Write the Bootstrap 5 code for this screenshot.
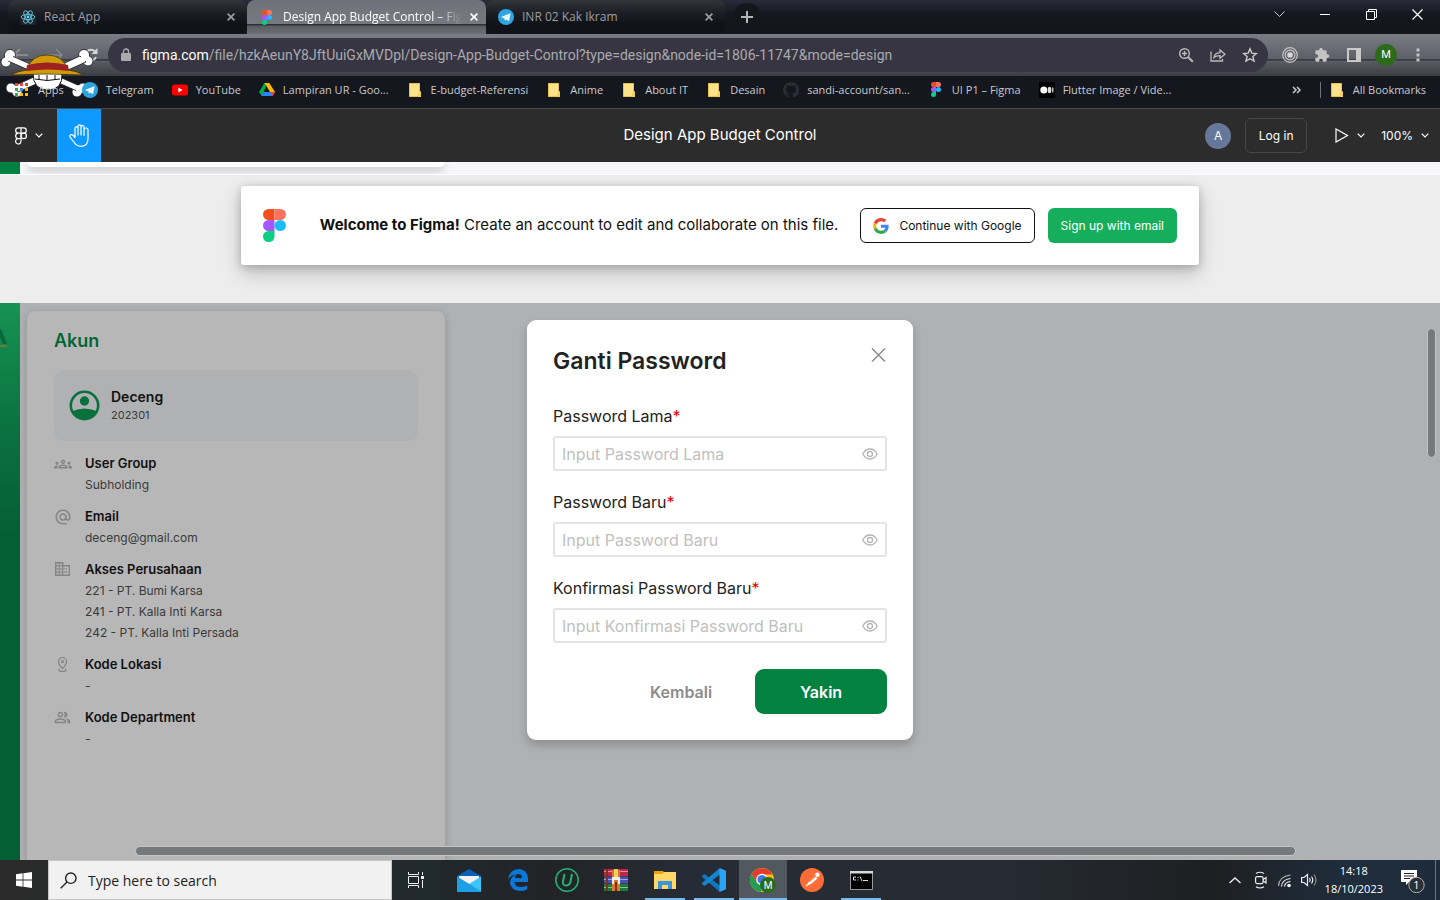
<!DOCTYPE html>
<html lang="en">
<head>
<meta charset="utf-8">
<meta name="viewport" content="width=device-width, initial-scale=1">
<title>Design App Budget Control – Figma</title>
<link href="https://cdn.jsdelivr.net/npm/bootstrap@5.3.0/dist/css/bootstrap.min.css" rel="stylesheet">
<style>
  :root { --ui: "Open Sans", "Noto Sans", sans-serif; --brand: #038141; }
  body { font-family: Inter, "Liberation Sans", sans-serif; color: #111; }
  button, input { font-family: inherit; }
  svg { display: block; flex: none; }
  .plain { background: none; border: 0; padding: 0; color: inherit; }
  .screen { height: 100vh; }

  /* browser chrome */
  .chrome { font-family: var(--ui); font-size: 11px; line-height: 16px; color: #c9cacd; background: #14171e; }
  .tabstrip { height: 34px; padding-left: 8px; background: linear-gradient(#292b3a, #161820 40%, #13151d); }
  .tab-item { flex: 0 1 239px; min-width: 0; height: 34px; padding: 0 8px 0 12px; gap: 4px; color: #9d9ea1; font-size: 12px;
    background: linear-gradient(#33353b, #1b1d24 40%, #101219 70%); border-radius: 8px; }
  .tab-item > svg { margin-right: 4px; }
  .tab-item.active { background: linear-gradient(#70727b, #777980 70%, #2f3036 72%, #5c5e66 78%, #6d6f77); color: #fff; border-radius: 8px 8px 0 0; }
  .tab-item a { color: inherit; }
  .tab-item.active a { -webkit-mask: linear-gradient(90deg, #000 86%, transparent); mask: linear-gradient(90deg, #000 86%, transparent); }
  .newtab { width: 28px; height: 28px; border-radius: 50%; background: #14161c; }
  .winbtn { width: 46px; height: 28px; }
  .toolbar { height: 42px; padding: 4px 11px 4px 12px;
    background: linear-gradient(#7a7c84, #5d5f68 60%, #2c2d33 61%, #5a5c64 65%, #3b3c44); }
  .omnibox { height: 34px; border-radius: 17px; background: #373542; color: #a9a9ae; padding: 0 10px 0 12px; gap: 10px; }
  .address { font: 14px/20px Roboto, sans-serif; }
  .omnibox b { color: #fff; font-weight: 400; }
  .navspace { width: 96px; }
  .actions { gap: 10px; margin-left: 11px; }
  .actions button { width: 22px; }
  .actions svg { margin: 0 auto; }
  .profile { height: 22px; border-radius: 50%; background: #2c6a1c; color: #fff; font: 11px Roboto, sans-serif; line-height: 22px; }
  .bookmarks { height: 33px; border-bottom: 1px solid #494b51; padding: 0 14px 5px; gap: 18px; }
  .bookmarks a { color: #c9cacd; gap: 8px; }
  .straw { left: 0; top: 48px; }

  /* editor bar */
  .editor { height: 53px; background: #2c2c2c; color: #fff; font-size: 12px; }
  .side { flex: 1 1 0; }
  .main-menu { width: 57px; }
  .hand { width: 44px; height: 53px; background: #0d99ff; }
  .doc-title { font-size: 15px; }
  .avatar { width: 26px; height: 26px; border-radius: 50%; background: #667799; line-height: 26px; }
  .login { border: 1px solid #484848; border-radius: 6px; height: 35px; width: 62px; margin: 0 24px 0 14px; color: #fff; font-size: 12px; }
  .zoom-level { margin: 0 11px 0 16px; }

  /* canvas */
  .canvas { background: #ededed; min-height: 0; }
  .frame-tail { height: 13px; background: #f5f7fa; border-bottom: 1px solid #fff; }
  .rail { width: 20px; background: var(--brand); }
  .tail-card { width: 418px; height: 5px; margin-left: 7px; background: #fff; border-radius: 0 0 8px 8px; box-shadow: 0 3px 8px #0004; }
  .banner { width: 100%; max-width: 958px; min-height: 79px; margin: 11px auto 38px; padding: 0 22px; gap: 22px; background: #fff; border-radius: 3px;
    box-shadow: 0 8px 20px #0003, 0 2px 8px #0003; font-size: 15px; }
  .banner-actions { gap: 13px; }
  .banner .btn { height: 35px; font-size: 12px; border-radius: 6px; padding: 0 12px; gap: 10px; }
  .btn-google { border: 1px solid #111; color: #111; background: #fff; }
  .btn-mail { background: #14ae5c; color: #fff; }
  .frame { min-height: 0; background: #afb1b3; }
  .rail-dim { background: linear-gradient(#169354, #0b7240 22%, #055f34 42%, #055f34); }
  .account { width: 418px; margin: 8px 0 0 7px; padding: 18px 27px; background: #b7b7b7; border-radius: 8px 8px 0 0; box-shadow: 0 2px 8px #0003; font-size: 12px; line-height: 21px; color: #3a3a3a; }
  .account h1 { font-size: 18px; line-height: 24px; margin: 0 0 17px; font-weight: 600; color: #036635; }
  .who { height: 71px; border-radius: 10px; background: #afb1b3; padding: 0 15px; gap: 11px; margin-bottom: 12px; line-height: 18px; font-size: 11px; }
  .who strong { font-size: 14px; }
  .account strong, .account dt { font-weight: 600; color: #111; }
  .account dt { font-size: 13px; }
  .account dd { margin: 0; }
  .facts { gap: 11px; margin: 0; }
  .facts > div { display: grid; grid-template-columns: 17px 1fr; column-gap: 14px; align-items: center; }
  .facts dd { grid-column: 2; }

  .dialog-box { top: 17px; width: 386px; padding: 26px; background: #fff; border-radius: 9px; box-shadow: 0 5px 10px #0003; color: #222; font-size: 16px; line-height: 24px; }
  .dialog-head { margin-bottom: 27px; }
  .dialog-box h2 { font-size: 23px; line-height: 30px; font-weight: 600; margin: 0; }
  .dialog-box label { line-height: 26px; margin-bottom: 7px; display: block; }
  .dialog-box label span { color: #e80000; }
  .field { height: 35px; border: 2px solid #e4e4e4; border-radius: 3px; padding: 0 7px; margin-bottom: 18px; }
  .field .form-control { font-size: 16px; padding: 1px 0 0; border: 0; color: #222; }
  .field .form-control::placeholder { color: #bfbfbf; }
  .dialog-box .btn { height: 45px; width: 132px; border-radius: 9px; font-size: 16px; font-weight: 600; padding: 0; }
  .btn-brand { background: var(--brand); color: #fff; }
  .btn-quiet { color: #8c8c8c; }
  .bar { background: #777879; border: 1px solid #c4c5c6; border-radius: 5px; }
  .bar-x { left: 9.4%; right: 10%; bottom: 4px; height: 10px; }
  .bar-y { right: 4px; top: 25px; height: 130px; width: 9px; }

  /* taskbar */
  .taskbar { height: 40px; font-family: var(--ui); color: #fff;
    background: linear-gradient(90deg, #2b2b2b, #20292e 30%, #222326 38%, #262c35 48%, #262b33 70%, #1d1f21 84%, #1f2d3d 94%, #1e2b3a); }
  .task { width: 48px; height: 40px; margin-right: 1px; flex: none; }
  .open-line { border-bottom: 2px solid #76b9ed; width: 40px; margin: 0 5px 0 4px; padding-top: 2px; }
  .task.current { background: #525860; border-bottom: 2px solid #76b9ed; padding-top: 2px; }
  .search { width: 344px; height: 40px; background: #f1f1f1; border: 1px solid #c6c6c6; padding-left: 11px; gap: 9px; color: #222; }
  .search input { font-size: 14px; border: 0; background: none; color: #222; outline: 0; width: 280px; }
  .search input::placeholder { color: #222; opacity: 1; }
  .clock { font-size: 11px; line-height: 18px; }
  .peek { width: 5px; height: 40px; border-left: 1px solid #6c757d; }
</style>
</head>
<body>
<svg width="0" height="0" class="position-absolute" aria-hidden="true">
  <defs>
    <symbol id="figma" viewBox="0 0 38 57"><path fill="#f24e1e" d="M19 0H9.500a9.500 9.500 0 0 0 0 19H19z"/><path fill="#ff7262" d="M19 0h9.500a9.500 9.500 0 0 1 0 19H19z"/><path fill="#a259ff" d="M19 19H9.500a9.500 9.500 0 0 0 0 19H19z"/><circle cx="28.500" cy="28.500" r="9.500" fill="#1abcfe"/><path fill="#0acf83" d="M19 38H9.500A9.500 9.500 0 1 0 19 47.500z"/></symbol>
    <symbol id="telegram" viewBox="0 0 16 16"><circle cx="8" cy="8" r="8" fill="#2ca5e0"/><path fill="#fff" d="M3 8 12.500 4.200 11 12.300 8.300 10.400 6.900 11.700 6.500 9.600z"/><path stroke="#9cc9e4" stroke-width=".7" d="m6.600 9.500 4.100-3.500"/></symbol>
    <symbol id="folder" viewBox="0 0 16 16"><path fill="#ffe38a" stroke="#e8c24a" d="M2.500 1.500h10v8h1v5h-11z"/><path fill="#f6cf57" d="M11 11h3v4h-3z"/></symbol>
    <symbol id="close" viewBox="0 0 8 8"><path stroke="currentColor" stroke-width="1.700" d="m.6.600 6.800 6.800M7.400.6.600 7.400"/></symbol>
    <symbol id="chev" viewBox="0 0 8 5"><path fill="none" stroke="currentColor" stroke-width="1.200" d="m.7.700 3.300 3.300L7.300.7"/></symbol>
    <symbol id="eye" viewBox="0 0 16 12"><path fill="none" stroke="#b5b5b5" stroke-width="1.300" d="M.8 6Q3.500 1 8 1t7.200 5Q12.500 11 8 11T.8 6z"/><circle cx="8" cy="6" r="2.500" fill="none" stroke="#b5b5b5" stroke-width="1.300"/></symbol>
  </defs>
</svg>

<div class="screen d-flex flex-column overflow-hidden">
  <header class="chrome position-relative">
    <div class="tabstrip d-flex align-items-center">
      <div class="tab-item d-flex align-items-center">
        <svg width="16" height="16" viewBox="0 0 16 16"><rect width="16" height="16" rx="2" fill="#20232a"/><g fill="none" stroke="#61b9d3"><ellipse cx="8" cy="8" rx="6.800" ry="2.600"/><ellipse cx="8" cy="8" rx="6.800" ry="2.600" transform="rotate(60 8 8)"/><ellipse cx="8" cy="8" rx="6.800" ry="2.600" transform="rotate(120 8 8)"/></g><circle cx="8" cy="8" r="1.400" fill="#61dafb"/></svg>
        <a href="#" class="text-decoration-none flex-fill text-nowrap">React App</a>
        <button class="plain p-1" aria-label="Close tab"><svg width="8" height="8"><use href="#close"/></svg></button>
      </div>
      <div class="tab-item active d-flex align-items-center">
        <svg width="16" height="15"><use href="#figma"/></svg>
        <a href="#" class="text-decoration-none flex-fill text-nowrap">Design App Budget Control – Fig</a>
        <button class="plain p-1" aria-label="Close tab"><svg width="8" height="8"><use href="#close"/></svg></button>
      </div>
      <div class="tab-item d-flex align-items-center">
        <svg width="16" height="16"><use href="#telegram"/></svg>
        <a href="#" class="text-decoration-none flex-fill text-nowrap">INR 02 Kak Ikram</a>
        <button class="plain p-1" aria-label="Close tab"><svg width="8" height="8"><use href="#close"/></svg></button>
      </div>
      <button class="plain newtab d-flex align-items-center justify-content-center ms-2" aria-label="New tab"><svg width="12" height="12" viewBox="0 0 12 12"><path stroke="#b5b5b5" stroke-width="2" d="M6 0v12M0 6h12"/></svg></button>
      <div class="d-flex ms-auto align-self-start text-white">
        <button class="plain winbtn d-flex align-items-center justify-content-center" aria-label="Search tabs"><svg width="11" height="7" viewBox="0 0 11 7"><path fill="none" stroke="#ccc" d="m.5.500 5 5 5-5"/></svg></button>
        <button class="plain winbtn d-flex align-items-center justify-content-center" aria-label="Minimize"><svg width="10" height="1"><path fill="#fff" d="M0 0h10v1H0z"/></svg></button>
        <button class="plain winbtn d-flex align-items-center justify-content-center" aria-label="Restore"><svg width="11" height="11" viewBox="0 0 11 11"><path fill="none" stroke="#fff" d="M.5 2.500h8v8h-8zM2.500 2V.5h8v8H9"/></svg></button>
        <button class="plain winbtn d-flex align-items-center justify-content-center" aria-label="Close"><svg width="11" height="11" viewBox="0 0 11 11"><path stroke="#fff" stroke-width="1.200" d="m.5.500 10 10m0-10-10 10"/></svg></button>
      </div>
    </div>

    <div class="toolbar d-flex align-items-center">
      <div class="navspace d-flex align-items-center gap-3">
        <button class="plain" aria-label="Back"><svg width="16" height="14" viewBox="0 0 16 14"><path fill="none" stroke="#96979c" stroke-width="1.500" d="M16 7H2m6-6L2 7l6 6"/></svg></button>
        <button class="plain ms-1" aria-label="Forward"><svg width="16" height="14" viewBox="0 0 16 14"><path fill="none" stroke="#86878c" stroke-width="1.500" d="M0 7h14M8 1l6 6-6 6"/></svg></button>
        <button class="plain ms-1" aria-label="Reload"><svg width="14" height="14" viewBox="0 0 14 14"><path fill="none" stroke="#d5d5d5" stroke-width="2" d="M12 9a5.400 5.400 0 1 1-1-5.500"/><path fill="#d5d5d5" d="M13.500 0v6h-6z"/></svg></button>
      </div>
      <div class="omnibox flex-fill d-flex align-items-center">
        <svg width="12" height="14" viewBox="0 0 12 14"><path fill="#a9a9ae" d="M2 5h8q1 0 1 1v6q0 1-1 1H2q-1 0-1-1V6q0-1 1-1z"/><path fill="none" stroke="#a9a9ae" stroke-width="1.400" d="M3.500 5V3.500a2.500 2.500 0 0 1 5 0V5"/></svg>
        <div class="address flex-fill text-nowrap overflow-hidden" role="textbox" contenteditable="true" aria-label="Address"><b>figma.com</b>/file/hzkAeunY8JftUuiGxMVDpl/Design-App-Budget-Control?type=design&amp;node-id=1806-11747&amp;mode=design</div>
        <div class="d-flex align-items-center gap-3">
          <button class="plain" aria-label="Zoom"><svg width="16" height="16" viewBox="0 0 16 16"><g fill="none" stroke="#bbb" stroke-width="1.400"><circle cx="6.500" cy="6.500" r="4.800"/><path d="M6.500 4v5M4 6.500h5"/><path stroke-width="2" d="m10.200 10.200 4.600 4.600"/></g></svg></button>
          <button class="plain" aria-label="Share"><svg width="16" height="16" viewBox="0 0 16 16"><path fill="none" stroke="#bbb" stroke-width="1.300" d="M1 4.500V14h11.500v-2M4 10.500Q4.500 6 10 5.600V3l5 4.300-5 4V8.600Q6 8.500 4 10.500z"/></svg></button>
          <button class="plain" aria-label="Bookmark"><svg width="16" height="16" viewBox="0 0 16 16"><path fill="none" stroke="#ccc" stroke-width="1.400" d="m8 1.800 1.800 4.300 4.600.4-3.500 3 1.100 4.600L8 11.700l-4 2.400 1.100-4.600-3.500-3 4.600-.4z"/></svg></button>
        </div>
      </div>
      <div class="actions d-flex align-items-center">
        <button class="plain" aria-label="Recorder"><svg width="16" height="16" viewBox="0 0 16 16"><g fill="none" stroke="#c4c4c4" stroke-width="1.200"><circle cx="8" cy="8" r="7.300"/><circle cx="8" cy="8" r="4.900"/></g><circle cx="8" cy="8" r="2.800" fill="#d8d8d8"/></svg></button>
        <button class="plain" aria-label="Extensions"><svg width="16" height="16" viewBox="0 0 24 24"><path fill="#c4c4c4" d="M20.500 11H19V7c0-1.100-.9-2-2-2h-4V3.500C13 2.120 11.880 1 10.500 1S8 2.120 8 3.500V5H4c-1.100 0-1.990.9-1.990 2v3.800H3.500c1.490 0 2.700 1.210 2.700 2.700s-1.210 2.700-2.700 2.700H2V20c0 1.100.9 2 2 2h3.800v-1.500c0-1.490 1.210-2.700 2.700-2.700 1.490 0 2.700 1.210 2.700 2.700V22H17c1.100 0 2-.9 2-2v-4h1.500c1.380 0 2.500-1.120 2.500-2.500S21.880 11 20.500 11z"/></svg></button>
        <button class="plain" aria-label="Side panel"><svg width="16" height="14" viewBox="0 0 16 14"><path fill="none" stroke="#c9c9c9" stroke-width="2" d="M2 1h12v12H2z"/><path fill="#c9c9c9" d="M10 1h5v12h-5z"/></svg></button>
        <button class="plain profile" aria-label="Profile">M</button>
        <button class="plain" aria-label="Menu"><svg width="4" height="14" viewBox="0 0 4 14"><path fill="#c4c4c4" d="M.5.500h3v3h-3zm0 5h3v3h-3zm0 5h3v3h-3z"/></svg></button>
      </div>
    </div>

    <svg class="straw position-absolute" width="95" height="50" viewBox="0 0 95 50">
      <g fill="#fff" stroke="#17181c" stroke-width=".8"><circle cx="10" cy="7" r="5.500"/><circle cx="6" cy="14" r="5"/><circle cx="84" cy="7" r="5.500"/><circle cx="88" cy="13" r="5"/><circle cx="11" cy="40" r="5"/><circle cx="17" cy="44" r="5"/><circle cx="83" cy="40" r="5"/><circle cx="77" cy="44" r="5"/>
      <path d="M12 8 80 38l-3 5L8 13z"/><path d="m80 8 6 6-68 30-4-6z"/></g>
      <g fill="#fff"><circle cx="9" cy="9" r="4"/><circle cx="85" cy="9" r="4"/><circle cx="14" cy="41" r="4"/><circle cx="80" cy="41" r="4"/></g>
      <path fill="#fff" stroke="#111" d="M33 25h29q1 17-14 17T33 25z"/><path fill="none" stroke="#111" d="M35 31q12 3 25 0M39 27v5m8-5v6m8-6v5"/>
      <path fill="#cf9a0a" stroke="#3b2a08" stroke-width=".7" d="M11 27q7-4 16-5Q31 7 47 7t21 15q9 1 15 5-36-2-72 0z"/>
      <path fill="#9d2323" d="M27 17q20-5 41 0l1 6q-21-3-43 0z"/>
    </svg>

    <nav class="bookmarks d-flex align-items-center position-relative text-nowrap" aria-label="Bookmarks">
      <a href="#" class="text-decoration-none d-flex align-items-center"><svg width="16" height="16" viewBox="0 0 16 16"><path fill="#ea4335" d="M1 1h3v3H1zm5 0h3v3H6zm5 0h3v3h-3z"/><path fill="#34a853" d="M1 6h3v3H1zm0 5h3v3H1z"/><path fill="#4285f4" d="M6 6h3v3H6z"/><path fill="#fbbc04" d="M11 6h3v3h-3zm-5 5h3v3H6zm5 0h3v3h-3z"/></svg>Apps</a>
      <a href="#" class="text-decoration-none d-flex align-items-center"><svg width="16" height="16"><use href="#telegram"/></svg>Telegram</a>
      <a href="#" class="text-decoration-none d-flex align-items-center"><svg width="16" height="16" viewBox="0 0 16 16"><rect y="2.500" width="16" height="11" rx="2.500" fill="#f00"/><path fill="#fff" d="m6.300 5.600 4.200 2.400-4.200 2.400z"/></svg>YouTube</a>
      <a href="#" class="text-decoration-none d-flex align-items-center"><svg width="16" height="16" viewBox="0 0 16 16"><path fill="#00ac47" d="M5.300 1h3L3 14.200 0 10.200z"/><path fill="#ffba00" d="M5.700 1h4.600L16 10h-5z"/><path fill="#2684fc" d="M4.600 10H16l-2.500 4H2.500z"/><path fill="#ea4335" d="M11 10h5l-2.200 4z"/></svg>Lampiran UR - Goo...</a>
      <a href="#" class="text-decoration-none d-flex align-items-center"><svg width="16" height="16"><use href="#folder"/></svg>E-budget-Referensi</a>
      <a href="#" class="text-decoration-none d-flex align-items-center"><svg width="16" height="16"><use href="#folder"/></svg>Anime</a>
      <a href="#" class="text-decoration-none d-flex align-items-center"><svg width="16" height="16"><use href="#folder"/></svg>About IT</a>
      <a href="#" class="text-decoration-none d-flex align-items-center"><svg width="16" height="16"><use href="#folder"/></svg>Desain</a>
      <a href="#" class="text-decoration-none d-flex align-items-center"><svg width="16" height="16" viewBox="0 0 16 16"><path fill="#2a2e34" d="M8 0C3.580 0 0 3.580 0 8c0 3.540 2.290 6.530 5.470 7.590.4.070.55-.17.55-.38 0-.19-.01-.82-.01-1.490-2.010.37-2.530-.49-2.690-.94-.09-.23-.48-.94-.82-1.130-.28-.15-.68-.52-.01-.53.630-.01 1.080.58 1.230.82.720 1.210 1.870.87 2.330.66.070-.52.280-.87.510-1.070-1.780-.2-3.640-.89-3.640-3.950 0-.87.310-1.590.820-2.150-.08-.2-.36-1.020.08-2.120 0 0 .67-.21 2.200.82.640-.18 1.320-.27 2-.27s1.360.09 2 .27c1.530-1.040 2.200-.82 2.200-.82.440 1.100.160 1.920.080 2.120.510.56.820 1.270.820 2.150 0 3.070-1.870 3.750-3.650 3.950.290.25.540.730.540 1.480 0 1.070-.01 1.930-.01 2.200 0 .21.150.46.550.38A8.010 8.010 0 0 0 16 8c0-4.420-3.580-8-8-8z"/></svg>sandi-account/san...</a>
      <a href="#" class="text-decoration-none d-flex align-items-center"><svg width="16" height="15"><use href="#figma"/></svg>UI P1 – Figma</a>
      <a href="#" class="text-decoration-none d-flex align-items-center"><svg width="16" height="16" viewBox="0 0 16 16"><rect width="16" height="16" rx="1" fill="#000"/><circle cx="4.800" cy="8" r="3.500" fill="#fff"/><ellipse cx="10.500" cy="8" rx="1.800" ry="3.200" fill="#ddd"/><path fill="#bbb" d="M13 5.500h1.500v5H13z"/></svg>Flutter Image / Vide...</a>
      <button class="plain ms-auto" aria-label="More bookmarks"><svg width="10" height="8" viewBox="0 0 10 8"><path fill="none" stroke="#c9cacd" stroke-width="1.500" d="m1 1 3 3-3 3m4-6 3 3-3 3"/></svg></button>
      <a href="#" class="text-decoration-none d-flex align-items-center border-start border-secondary ps-2"><svg width="16" height="16"><use href="#folder"/></svg>All Bookmarks</a>
    </nav>
  </header>

  <header class="editor d-flex align-items-center">
    <div class="side d-flex align-items-center">
      <button class="plain main-menu d-flex align-items-center justify-content-center gap-2" aria-label="Main menu">
        <svg width="12" height="18" viewBox="0 0 12 18"><g fill="none" stroke="#fff" stroke-width="1.200"><path d="M6 .8H3.400a2.700 2.700 0 0 0 0 5.400H6zm0 0h2.600a2.700 2.700 0 0 1 0 5.400H6zM6 6.200H3.400a2.700 2.700 0 0 0 0 5.400H6zM6 11.600H3.400A2.700 2.700 0 1 0 6 14.300z"/><circle cx="8.700" cy="8.900" r="2.700"/></g></svg>
        <svg width="8" height="5"><use href="#chev"/></svg>
      </button>
      <button class="plain hand d-flex align-items-center justify-content-center" aria-label="Hand tool"><svg width="21" height="23" viewBox="0 0 21 23"><path fill="none" stroke="#fff" stroke-width="1.200" stroke-linejoin="round" d="M6 13.500V4.400a1.500 1.500 0 0 1 3 0V11 2.300a1.500 1.500 0 0 1 3 0V11 3.200a1.500 1.500 0 0 1 3 0V11.500 6a1.600 1.600 0 0 1 4 0v8.500q0 7.800-7 7.800-4 0-6-2.800L1.200 13.300q-1-1.800.6-2.500 1.400-.5 2.500.7z"/></svg></button>
    </div>
    <div class="doc-title">Design App Budget Control</div>
    <div class="side d-flex align-items-center justify-content-end">
      <span class="avatar text-center">A</span>
      <button class="btn login p-0">Log in</button>
      <button class="plain d-flex align-items-center gap-2 ps-1" aria-label="Present"><svg width="14" height="15" viewBox="0 0 14 15"><path fill="none" stroke="#fff" stroke-width="1.200" d="M1 1v13l11.500-6.500z"/></svg><svg width="8" height="5"><use href="#chev"/></svg></button>
      <button class="plain zoom-level d-flex align-items-center gap-2">100% <svg width="8" height="5"><use href="#chev"/></svg></button>
    </div>
  </header>

  <main class="canvas flex-fill d-flex flex-column">
    <div class="frame-tail d-flex flex-shrink-0 overflow-hidden"><div class="rail"></div><div class="tail-card"></div></div>

    <section class="banner d-flex align-items-center flex-shrink-0">
      <svg width="23" height="33" viewBox="0 0 38 57" preserveAspectRatio="none"><use href="#figma"/></svg>
      <div class="flex-fill text-end text-nowrap"><strong>Welcome to Figma!</strong> Create an account to edit and collaborate on this file.</div>
      <div class="banner-actions d-flex">
        <button class="btn btn-google d-flex align-items-center"><svg width="16" height="16" viewBox="0 0 48 48"><path fill="#ea4335" d="M24 9.500c3.540 0 6.710 1.220 9.210 3.600l6.850-6.850C35.900 2.380 30.470 0 24 0 14.620 0 6.510 5.380 2.560 13.220l7.980 6.190C12.430 13.720 17.740 9.500 24 9.500z"/><path fill="#4285f4" d="M46.980 24.550c0-1.570-.15-3.090-.38-4.550H24v9.020h12.940c-.58 2.960-2.260 5.480-4.780 7.180l7.730 6c4.510-4.180 7.090-10.360 7.090-17.650z"/><path fill="#fbbc05" d="M10.530 28.590c-.48-1.450-.76-2.990-.76-4.590s.27-3.140.76-4.590l-7.980-6.190C.92 16.460 0 20.120 0 24c0 3.880.92 7.540 2.560 10.780l7.970-6.190z"/><path fill="#34a853" d="M24 48c6.480 0 11.930-2.130 15.890-5.810l-7.730-6c-2.150 1.450-4.920 2.300-8.160 2.300-6.260 0-11.570-4.220-13.470-9.910l-7.980 6.190C6.510 42.620 14.620 48 24 48z"/></svg>Continue with Google</button>
        <button class="btn btn-mail">Sign up with email</button>
      </div>
    </section>

    <div class="frame flex-fill d-flex position-relative overflow-hidden">
      <div class="rail rail-dim"><svg width="8" height="44" viewBox="0 0 8 44"><path fill="#07683c" d="M0 26h1l6 15H3L0 34z"/><path fill="#6f7a3a" d="M0 42h7v2H0z"/></svg></div>
      <section class="account">
        <h1>Akun</h1>
        <div class="who d-flex align-items-center">
          <svg width="31" height="31" viewBox="0 0 31 31"><circle cx="15.500" cy="15.500" r="13.700" fill="none" stroke="#0a713e" stroke-width="2.600"/><circle cx="15.500" cy="11" r="4.700" fill="#0a713e"/><path fill="#0a713e" d="M3.500 21Q15.500 16 27.500 21 24 29 15.500 29.500 7 29 3.500 21z"/></svg>
          <div class="d-flex flex-column"><strong>Deceng</strong><span>202301</span></div>
        </div>
        <dl class="facts d-flex flex-column">
          <div><svg width="18" height="18" viewBox="0 0 24 24" fill="#858585"><path d="M4 13c1.100 0 2-.9 2-2s-.9-2-2-2-2 .9-2 2 .9 2 2 2zm1.130 1.100c-.37-.06-.74-.1-1.130-.1-.99 0-1.930.21-2.780.58C.48 14.900 0 15.620 0 16.430V18h4.500v-1.610c0-.83.230-1.610.630-2.290zM20 13c1.100 0 2-.9 2-2s-.9-2-2-2-2 .9-2 2 .9 2 2 2zm4 3.430c0-.81-.48-1.530-1.220-1.850-.85-.37-1.790-.58-2.780-.58-.39 0-.76.04-1.130.1.400.68.630 1.460.630 2.290V18H24v-1.570zm-7.760-2.780c-1.170-.52-2.610-.9-4.240-.9s-3.070.39-4.240.9C6.680 14.130 6 15.210 6 16.390V18h12v-1.610c0-1.180-.68-2.260-1.760-2.740zM8.070 16c.09-.23.130-.39.910-.69.970-.38 1.990-.56 3.020-.56s2.050.18 3.020.56c.77.300.81.460.910.690H8.070zM12 8c.55 0 1 .45 1 1s-.45 1-1 1-1-.45-1-1 .45-1 1-1m0-2c-1.660 0-3 1.340-3 3s1.340 3 3 3 3-1.340 3-3-1.340-3-3-3z"/></svg><dt>User Group</dt><dd>Subholding</dd></div>
          <div><svg width="18" height="18" viewBox="0 0 24 24" fill="#858585"><path d="M12 2C6.480 2 2 6.480 2 12s4.480 10 10 10h5v-2h-5c-4.340 0-8-3.660-8-8s3.660-8 8-8 8 3.660 8 8v1.430c0 .79-.71 1.570-1.500 1.570s-1.500-.78-1.500-1.570V12c0-2.760-2.240-5-5-5s-5 2.240-5 5 2.240 5 5 5c1.380 0 2.640-.56 3.540-1.470.65.89 1.770 1.470 2.960 1.470 1.970 0 3.500-1.600 3.500-3.570V12c0-5.520-4.480-10-10-10zm0 13c-1.660 0-3-1.340-3-3s1.340-3 3-3 3 1.340 3 3-1.340 3-3 3z"/></svg><dt>Email</dt><dd>deceng@gmail.com</dd></div>
          <div><svg width="17" height="17" viewBox="0 0 17 17"><g fill="none" stroke="#858585"><path stroke-width="1.400" d="M1.700 1.700h7v12.600h-7zM8.700 4.700h6.600v9.600H8.700z"/><path d="M5.200 1v13M1 4.800h8M1 8h8M1 11.200h8M12.500 7v1.500m0 1.500v2M10.700 7v1.500m0 1.500v2"/></g></svg><dt>Akses Perusahaan</dt><dd>221 - PT. Bumi Karsa</dd><dd>241 - PT. Kalla Inti Karsa</dd><dd>242 - PT. Kalla Inti Persada</dd></div>
          <div><svg width="17" height="17" viewBox="0 0 17 17"><g fill="none" stroke="#858585" stroke-width="1.200"><path d="M8.500 12.500Q4.500 8.500 4.500 5.500a4 4 0 0 1 8 0q0 3-4 7z"/><circle cx="8.500" cy="5.500" r="1"/><path d="M5.500 12.500Q3.500 15.500 8.500 15.500T11.500 12.500"/></g></svg><dt>Kode Lokasi</dt><dd>-</dd></div>
          <div><svg width="17" height="17" viewBox="0 0 24 24" fill="#858585"><path d="M16.670 13.130C18.040 14.060 19 15.320 19 17v3h4v-3c0-2.180-3.570-3.470-6.330-3.870zM15 12c2.210 0 4-1.790 4-4s-1.790-4-4-4c-.47 0-.91.1-1.330.240C14.500 5.270 15 6.580 15 8s-.5 2.730-1.330 3.760c.42.140.86.240 1.330.240zM9 12c2.210 0 4-1.790 4-4s-1.790-4-4-4-4 1.790-4 4 1.790 4 4 4zm0-6c1.100 0 2 .9 2 2s-.9 2-2 2-2-.9-2-2 .9-2 2-2zm0 7c-2.670 0-8 1.340-8 4v3h16v-3c0-2.660-5.330-4-8-4zm6 5H3v-.99C3.200 16.290 6.300 15 9 15s5.800 1.290 6 2v1z"/></svg><dt>Kode Department</dt><dd>-</dd></div>
        </dl>
      </section>

      <form class="dialog-box position-absolute start-50 translate-middle-x" role="dialog" aria-labelledby="dlg">
        <div class="dialog-head d-flex justify-content-between align-items-start">
          <h2 id="dlg">Ganti Password</h2>
          <button type="button" class="plain" aria-label="Close"><svg width="16" height="18" viewBox="0 0 16 18"><path stroke="#8c8c8c" stroke-width="1.500" d="m1 2.500 13 13m0-13-13 13"/></svg></button>
        </div>
        <label for="old">Password Lama<span>*</span></label>
        <div class="field d-flex align-items-center"><input id="old" type="password" class="form-control shadow-none" placeholder="Input Password Lama"><button type="button" class="plain" aria-label="Show"><svg width="16" height="12"><use href="#eye"/></svg></button></div>
        <label for="new">Password Baru<span>*</span></label>
        <div class="field d-flex align-items-center"><input id="new" type="password" class="form-control shadow-none" placeholder="Input Password Baru"><button type="button" class="plain" aria-label="Show"><svg width="16" height="12"><use href="#eye"/></svg></button></div>
        <label for="again">Konfirmasi Password Baru<span>*</span></label>
        <div class="field d-flex align-items-center"><input id="again" type="password" class="form-control shadow-none" placeholder="Input Konfirmasi Password Baru"><button type="button" class="plain" aria-label="Show"><svg width="16" height="12"><use href="#eye"/></svg></button></div>
        <div class="d-flex justify-content-end gap-2 pt-2">
          <button type="button" class="btn btn-quiet">Kembali</button>
          <button type="submit" class="btn btn-brand">Yakin</button>
        </div>
      </form>
      <div class="bar bar-x position-absolute"></div>
      <div class="bar bar-y position-absolute"></div>
    </div>
  </main>

  <footer class="taskbar d-flex align-items-center flex-shrink-0">
    <button class="plain task d-flex align-items-center justify-content-center me-0" aria-label="Start"><svg width="16" height="16" viewBox="0 0 16 16"><path fill="#fff" d="m0 2.200 6.600-.9v6.200H0zm7.400-1L16 0v7.500H7.400zM0 8.400h6.600v6.300L0 13.800zm7.400 0H16V16l-8.600-1.200z"/></svg></button>
    <label class="search d-flex align-items-center"><svg width="17" height="17" viewBox="0 0 17 17"><g fill="none" stroke="#222" stroke-width="1.400"><circle cx="10.800" cy="6.200" r="5.200"/><path d="m7 10-6.300 6.300"/></g></svg><input type="text" placeholder="Type here to search" aria-label="Search"></label>
    <button class="plain task d-flex align-items-center justify-content-center" aria-label="Task view"><svg width="16" height="16" viewBox="0 0 16 16"><path fill="none" stroke="#eee" d="M.5 4.500h10v7H.5zM.5 0v2.500h10V0M.5 16v-2.500h10V16M14.500 0v3m0 5v8"/><path fill="#eee" d="M13 4h3v3h-3z"/></svg></button>
    <button class="plain task d-flex align-items-center justify-content-center ms-1" aria-label="Mail"><svg width="24" height="23" viewBox="0 0 24 23"><path fill="#0f5db4" d="M0 7 12 0l12 7v4H0z"/><path fill="#f3f3f3" d="M2 7h20v8H2z"/><path fill="#1f9fe6" d="M0 7.500 24 22v1H0z"/><path fill="#3cc6f4" d="M24 7.500v15L12 15z"/></svg></button>
    <button class="plain task d-flex align-items-center justify-content-center" aria-label="Edge"><svg width="22" height="22" viewBox="0 0 22 22"><path fill="#0a78d7" d="M1 10Q3 0 12 0q9 1 9 10v3H7.500q.5 5 6 5 4 0 6.500-1.500v4Q17 22 13 22q-9-.5-10-8Q3 8 9 5.500 4 6 1 10zm6.800-1H15q0-4-3.300-4-3.400.2-3.900 4z"/></svg></button>
    <button class="plain task d-flex align-items-center justify-content-center" aria-label="Uninstaller"><svg width="24" height="24" viewBox="0 0 24 24"><g fill="none" stroke="#1fb574"><circle cx="12" cy="12" r="11.200" stroke-width="1.500"/><path stroke-width="2" d="M9.500 6 8 13.500q-.7 4 3 4t4.500-4L17 6"/></g></svg></button>
    <button class="plain task d-flex align-items-center justify-content-center" aria-label="WinRAR"><svg width="24" height="22" viewBox="0 0 24 22"><path fill="#c2254b" d="M0 0h24v7H0z"/><path fill="#e68aa0" d="M0 2h24v1H0z"/><path fill="#4a4fb3" d="M0 7.500h24v7H0z"/><path fill="#a3a6e4" d="M0 10h24v1H0z"/><path fill="#1c7a3a" d="M0 15h24v7H0z"/><path fill="#7cc48d" d="M0 18h24v1H0z"/><path fill="#d9772a" d="M8 1h8v21H8z"/><path fill="#ffcf5a" d="M10 0h4v8h-4z"/><path fill="#eee" d="M8 8h8v7h-2v-4h-4v4H8z"/><path fill="#7a3516" d="M11 13h2v9h-2zM2 0h2v22H2z"/></svg></button>
    <button class="plain task d-flex open-line align-items-center justify-content-center" aria-label="Explorer"><svg width="22" height="19" viewBox="0 0 22 19"><path fill="#e8a50c" d="M0 0h9l2 3v5H0z"/><path fill="#ffd866" d="M0 3h8l2-2h12v17H0z"/><path fill="#3b96dd" d="M4 10h14v8h-4v-4H8v4H4z"/></svg></button>
    <button class="plain task d-flex open-line align-items-center justify-content-center" aria-label="Visual Studio Code"><svg width="24" height="24" viewBox="0 0 24 24"><path fill="#0f76bf" d="M0 8l2.500-2L18 17.500V24L0 9z"/><path fill="#1685d1" d="M0 16l2.500 2L18 6.500V0L0 15z"/><path fill="#2aa5f4" d="m17.500 0 6.500 2.800v18.400L17.500 24z"/></svg></button>
    <button class="plain task current d-flex align-items-center justify-content-center" aria-label="Chrome"><svg width="26" height="25" viewBox="0 0 26 25"><circle cx="12" cy="12" r="12" fill="#fbc116"/><path fill="#e33b2e" d="M1.600 6A12 12 0 0 1 22.400 6.500H12L7 15z"/><path fill="#1f9d55" d="M1.600 6 7 15l5 3-1 6A12 12 0 0 1 1.600 6z"/><circle cx="12" cy="11.500" r="5.800" fill="#fff"/><circle cx="12" cy="11.500" r="4.600" fill="#3b7ded"/><circle cx="18" cy="17" r="8" fill="#2c6a1c"/><text x="18" y="21" font-size="10" font-family="Roboto" text-anchor="middle" fill="#fff">M</text></svg></button>
    <button class="plain task d-flex align-items-center justify-content-center" aria-label="Postman"><svg width="24" height="24" viewBox="0 0 24 24"><circle cx="12" cy="12" r="12" fill="#ff6c37"/><path fill="#fff" d="m5 19 4-5.500 6-5.500 2.500 2.500-6 5z"/><circle cx="17.300" cy="6.800" r="2.300" fill="#fff"/><path stroke="#ff6c37" d="m9 14 7-6"/></svg></button>
    <button class="plain task d-flex open-line align-items-center justify-content-center" aria-label="Command Prompt"><svg width="23" height="19" viewBox="0 0 23 19"><path fill="#000" stroke="#999" d="M.5.500h22v18H.5z"/><path fill="#d8d8d8" d="M0 0h23v2.500H0z"/><path fill="none" stroke="#ddd" d="M6 6H3.500v3H6M8 6v1m0 1.500v1M10 5.500l2 4.500m1-.500h5"/></svg></button>
    <div class="ms-auto d-flex align-items-center gap-2">
      <button class="plain me-1" aria-label="Hidden icons"><svg width="12" height="7" viewBox="0 0 12 7"><path fill="none" stroke="#eee" stroke-width="1.300" d="m.5 6 5.500-5 5.500 5"/></svg></button>
      <svg width="16" height="18" viewBox="0 0 16 18"><g fill="none" stroke="#eee" stroke-width="1.200"><rect x="2.600" y="5.600" width="7.500" height="7" rx="1.500"/><path d="m10 8.500 3-2v5.500l-3-2M3 2.500q4-2.500 8 0M3 15.800q4 2.400 8 0"/></g></svg>
      <svg width="16" height="16" viewBox="0 0 16 16"><g fill="none" stroke="#eee" stroke-width="1.200"><path d="M1.500 14Q2 4.500 13.500 3" opacity=".7"/><path d="M4.500 14.500Q5 7.500 13.500 6.500M7.500 14.500q.5-4.500 6-5"/></g><circle cx="12" cy="13.500" r="1.800" fill="#fff"/></svg>
      <svg width="16" height="14" viewBox="0 0 16 14"><g fill="none" stroke="#eee" stroke-width="1.200"><path d="M.6 4.500H3l3.500-3v11L3 9.500H.600zM8.500 5q1.500 2 0 4M10.500 3.500q2.500 3.500 0 7"/><path opacity=".5" d="M13 1.500q4 5.500 0 11"/></g></svg>
      <div class="clock text-center">14:18<br>18/10/2023</div>
      <button class="plain position-relative ms-2" aria-label="Notifications"><svg width="28" height="26" viewBox="0 0 28 26"><path fill="#fff" d="M2 3h16v12h-8l-3 3v-3H2z"/><path stroke="#222" stroke-width="1.200" d="M5 6.500h10M5 9h10M5 11.500h6"/><circle cx="17.500" cy="18" r="7.700" fill="#2c3036" stroke="#aaa"/><text x="17.500" y="22" font-size="11" font-family="Open Sans" text-anchor="middle" fill="#fff">1</text></svg></button>
      <div class="peek"></div>
    </div>
  </footer>
</div>
<script src="https://cdn.jsdelivr.net/npm/bootstrap@5.3.0/dist/js/bootstrap.bundle.min.js"></script>
</body>
</html>
